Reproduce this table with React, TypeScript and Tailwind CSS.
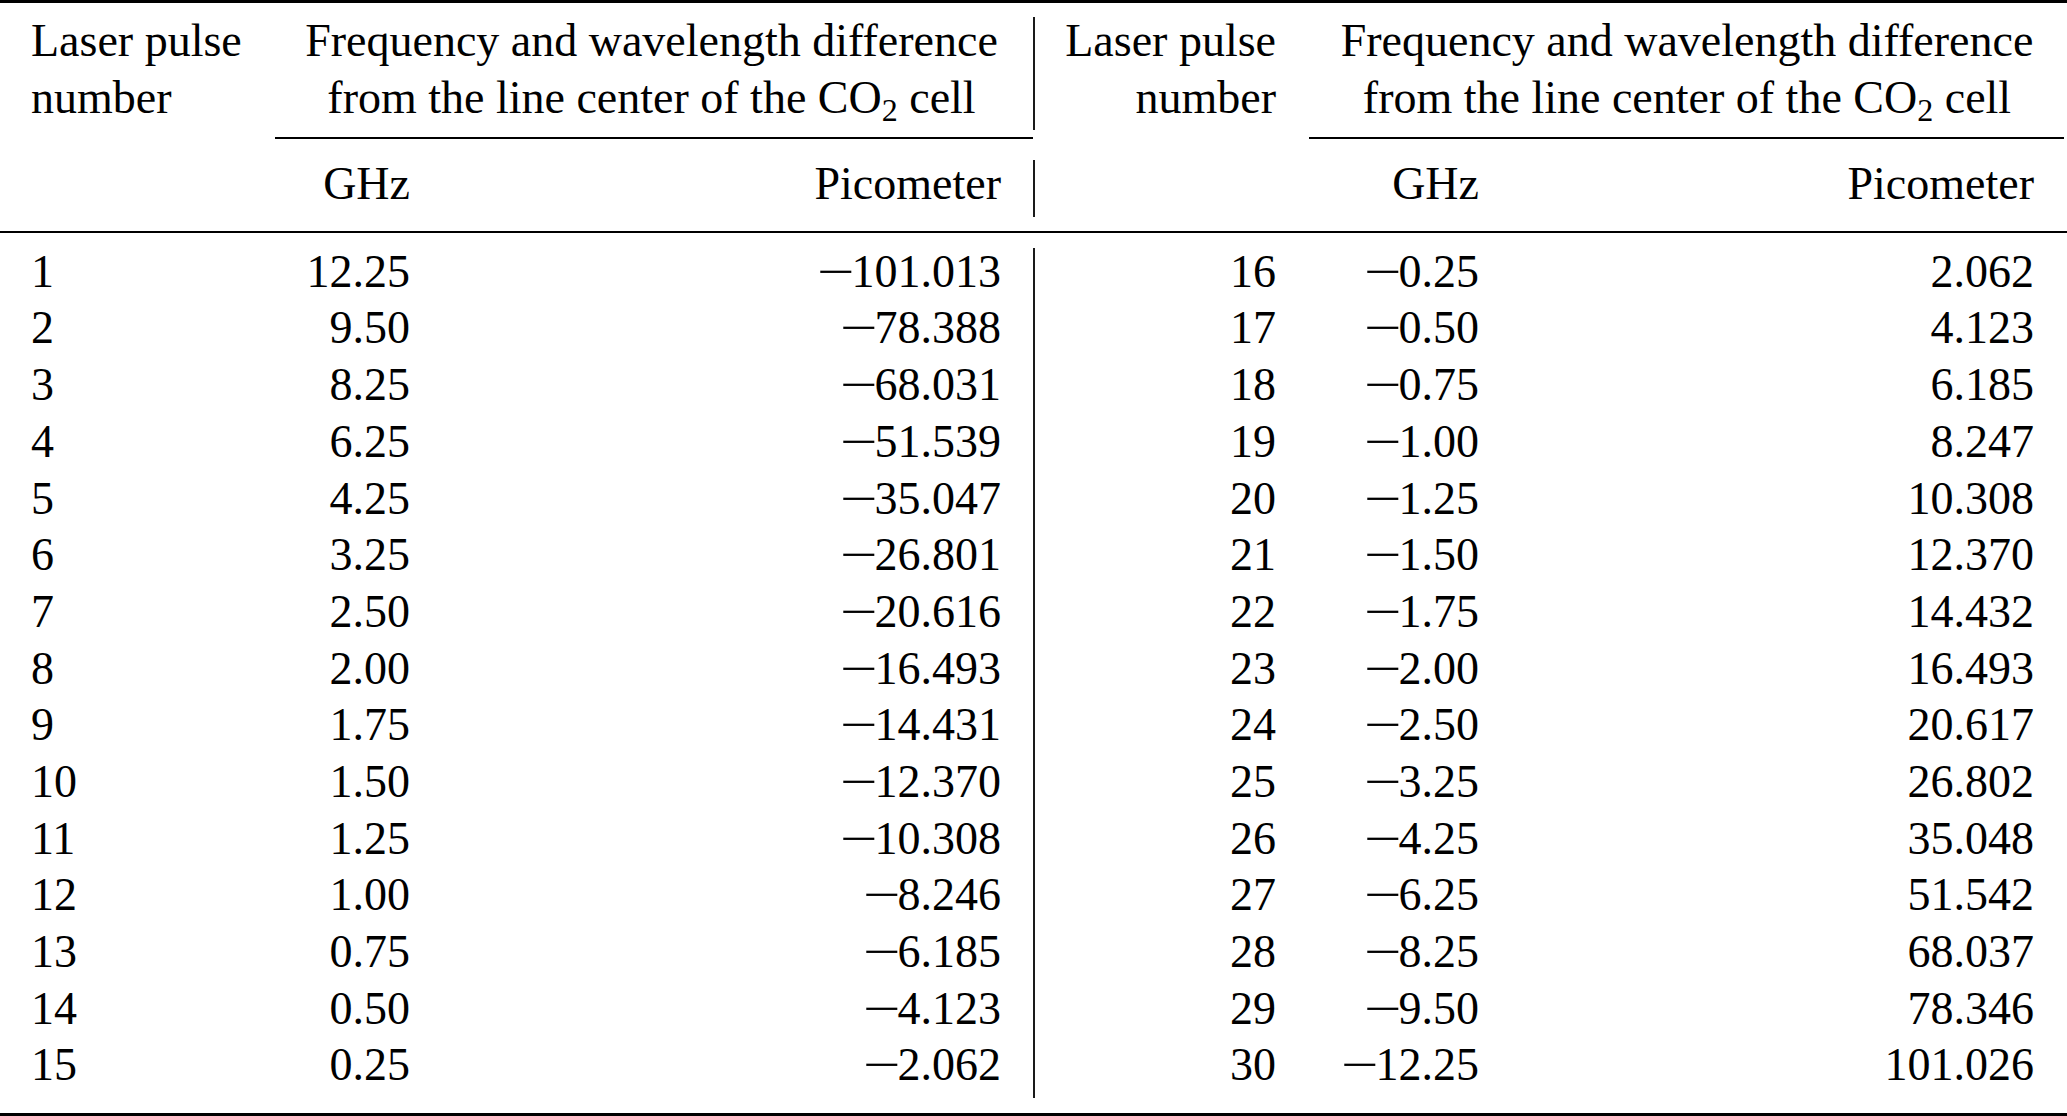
import React from "react";

const left: [string, string, string][] = [
  ["1", "12.25", "-101.013"],
  ["2", "9.50", "-78.388"],
  ["3", "8.25", "-68.031"],
  ["4", "6.25", "-51.539"],
  ["5", "4.25", "-35.047"],
  ["6", "3.25", "-26.801"],
  ["7", "2.50", "-20.616"],
  ["8", "2.00", "-16.493"],
  ["9", "1.75", "-14.431"],
  ["10", "1.50", "-12.370"],
  ["11", "1.25", "-10.308"],
  ["12", "1.00", "-8.246"],
  ["13", "0.75", "-6.185"],
  ["14", "0.50", "-4.123"],
  ["15", "0.25", "-2.062"],
];

const right: [string, string, string][] = [
  ["16", "-0.25", "2.062"],
  ["17", "-0.50", "4.123"],
  ["18", "-0.75", "6.185"],
  ["19", "-1.00", "8.247"],
  ["20", "-1.25", "10.308"],
  ["21", "-1.50", "12.370"],
  ["22", "-1.75", "14.432"],
  ["23", "-2.00", "16.493"],
  ["24", "-2.50", "20.617"],
  ["25", "-3.25", "26.802"],
  ["26", "-4.25", "35.048"],
  ["27", "-6.25", "51.542"],
  ["28", "-8.25", "68.037"],
  ["29", "-9.50", "78.346"],
  ["30", "-12.25", "101.026"],
];

function Num({ v }: { v: string }) {
  if (v.startsWith("-")) {
    return (
      <>
        <span className="inline-block scale-x-[1.45] mr-[3px]">{"\u2212"}</span>
        {v.slice(1)}
      </>
    );
  }
  return <>{v}</>;
}

const line = "h-[56.68px] leading-[48.3px] whitespace-nowrap";
const cols = "grid grid-cols-[275px_166px_592px_274px_203px_557px]";
const vline = "border-l-2 border-[#1a1a1a]";

function CO2Lines() {
  return (
    <>
      <div className={line}>Frequency and wavelength difference</div>
      <div className={line}>
        from the line center of the CO
        <span className="text-[32px] leading-none align-[-8px]">2</span> cell
      </div>
    </>
  );
}

export default function App() {
  return (
    <div className="w-[2067px] h-[1116px] bg-white text-black font-['Liberation_Serif','Times_New_Roman',serif] text-[46px] flex flex-col">
      <div className="h-[3px] bg-black shrink-0" />

      {/* header */}
      <div className={`${cols} mt-[14px]`}>
        <div className="pl-[31px]">
          <div className={line}>Laser pulse</div>
          <div className={line}>number</div>
        </div>
        <div className="col-span-2 text-center pr-[5px]">
          <CO2Lines />
        </div>
        <div className={`${vline} text-right pr-[31px]`}>
          <div className={line}>Laser pulse</div>
          <div className={line}>number</div>
        </div>
        <div className="col-span-2 text-center">
          <CO2Lines />
        </div>
      </div>

      {/* cmidrules */}
      <div className={`${cols} mt-[7px]`}>
        <div />
        <div className="col-span-2 h-[1.5px] bg-black" />
        <div />
        <div className="col-span-2 h-[1.5px] bg-black ml-[2px] mr-[3px]" />
      </div>

      {/* units row */}
      <div className={`${cols} mt-[21px]`}>
        <div className={line} />
        <div className={`${line} text-right pr-[31px]`}>GHz</div>
        <div className={`${line} text-right pr-[32px]`}>Picometer</div>
        <div className={`${line} ${vline}`} />
        <div className={`${line} text-right pr-[31px]`}>GHz</div>
        <div className={`${line} text-right pr-[33px]`}>Picometer</div>
      </div>

      <div className="h-[2px] bg-black mt-[14.3px] shrink-0" />

      {/* data */}
      <div className={`${cols} mt-[15px]`}>
        {left.map((l, i) => {
          const r = right[i];
          return (
            <React.Fragment key={i}>
              <div className={`${line} pl-[31px]`}>{l[0]}</div>
              <div className={`${line} text-right pr-[31px]`}>
                <Num v={l[1]} />
              </div>
              <div className={`${line} text-right pr-[32px]`}>
                <Num v={l[2]} />
              </div>
              <div className={`${line} ${vline} text-right pr-[31px]`}>{r[0]}</div>
              <div className={`${line} text-right pr-[31px]`}>
                <Num v={r[1]} />
              </div>
              <div className={`${line} text-right pr-[33px]`}>
                <Num v={r[2]} />
              </div>
            </React.Fragment>
          );
        })}
      </div>

      <div className="h-[3px] bg-black mt-[14.8px] shrink-0" />
    </div>
  );
}
